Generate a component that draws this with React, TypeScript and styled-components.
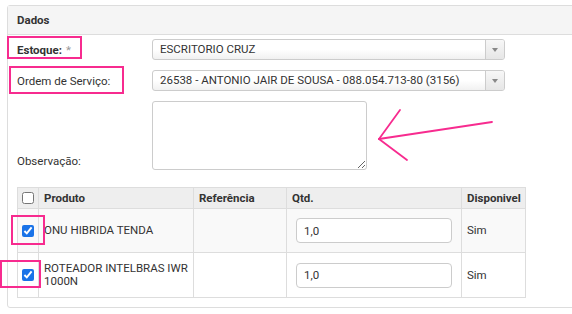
import React from 'react'
import styled, { createGlobalStyle } from 'styled-components'

const GlobalStyle = createGlobalStyle`
  body {
    margin: 0;
    background: #fff;
    font-family: Roboto, 'Liberation Sans', sans-serif;
    font-size: 11.5px;
    color: #333;
  }
`

const Page = styled.div`
  position: relative;
  width: 572px;
  height: 314px;
  overflow: hidden;
  padding: 5px 0 0 7px;
  box-sizing: border-box;
`

const Panel = styled.div`
  width: 600px;
  border: 1px solid #ddd;
  border-radius: 3px;
`

const PanelHeading = styled.div`
  height: 28px;
  line-height: 28px;
  padding-left: 9px;
  background: #f5f5f5;
  border-bottom: 1px solid #ddd;
  font-weight: 700;
`

const PanelBody = styled.div`
  padding: 4px 9px 9px;
`

const FormGrid = styled.div`
  display: grid;
  grid-template-columns: 135px 353px;
  row-gap: 10px;
`

const Label = styled.label<{ $bold?: boolean; $end?: boolean }>`
  display: flex;
  align-items: ${({ $end }) => ($end ? 'flex-end' : 'center')};
  padding-bottom: ${({ $end }) => ($end ? '2px' : '0')};
  font-weight: ${({ $bold }) => ($bold ? 700 : 400)};
  gap: 4px;
`

const Required = styled.span`
  color: #999;
  font-weight: 400;
`

const Select = styled.div`
  width: 353px;
  height: 21px;
  box-sizing: border-box;
  display: flex;
  align-items: stretch;
  border: 1px solid #ccc;
  border-radius: 3px;
  background: linear-gradient(#fff 0%, #fff 50%, #f1f1f1 100%);
  overflow: hidden;
`

const SelectValue = styled.span`
  flex: 1;
  padding-left: 7px;
  line-height: 19px;
  white-space: nowrap;
`

const SelectArrow = styled.span`
  width: 18px;
  border-left: 1px solid #ccc;
  background: linear-gradient(#f7f7f7, #e6e6e6);
  display: flex;
  align-items: center;
  justify-content: center;
  &::after {
    content: '';
    border-left: 3px solid transparent;
    border-right: 3px solid transparent;
    border-top: 4px solid #888;
  }
`

const TextArea = styled.textarea`
  width: 215px;
  height: 69px;
  box-sizing: border-box;
  border: 1px solid #ccc;
  border-radius: 3px;
  font-family: inherit;
  margin: 0;
`

const Table = styled.table`
  margin-top: 17px;
  border-collapse: collapse;
  width: 508px;
  table-layout: fixed;
`

const Th = styled.th<{ $w: number }>`
  width: ${({ $w }) => $w}px;
  height: 21px;
  padding: 0 5px;
  background: #eee;
  border: 1px solid #ddd;
  text-align: left;
  font-weight: 700;
  box-sizing: border-box;
`

const CheckTh = styled(Th)`
  padding: 0 0 0 4px;
`

const Tr = styled.tr<{ $striped?: boolean }>`
  background: ${({ $striped }) => ($striped ? '#f9f9f9' : '#fff')};
`

const Td = styled.td`
  border: 1px solid #ddd;
  padding: 9px 5px;
  height: 25px;
  vertical-align: middle;
  line-height: 13px;
`

const CheckTd = styled(Td)`
  padding: 0 0 0 4px;
`

const QtyTd = styled(Td)`
  padding: 9px;
`

const Check = styled.input.attrs({ type: 'checkbox' })`
  margin: 0;
  width: 12px;
  height: 12px;
  display: block;
  accent-color: #1a73e8;
`

const QtyInput = styled.input`
  width: 100%;
  height: 25px;
  box-sizing: border-box;
  border: 1px solid #ccc;
  border-radius: 4px;
  padding: 0 7px;
  font-family: inherit;
  font-size: 11.5px;
  color: #333;
  margin: 0;
`

const Mark = styled.div<{ $x: number; $y: number; $w: number; $h: number }>`
  position: absolute;
  left: ${({ $x }) => $x}px;
  top: ${({ $y }) => $y}px;
  width: ${({ $w }) => $w}px;
  height: ${({ $h }) => $h}px;
  border: 2px solid #f72b8f;
  box-sizing: border-box;
  pointer-events: none;
`

const ArrowSvg = styled.svg`
  position: absolute;
  left: 370px;
  top: 104px;
  pointer-events: none;
`

const items = [
  { nome: 'ONU HIBRIDA TENDA', qtd: '1,0' },
  { nome: 'ROTEADOR INTELBRAS IWR 1000N', qtd: '1,0' },
]

const App = () => {
  return (
    <Page>
      <GlobalStyle />
      <Panel>
        <PanelHeading>Dados</PanelHeading>
        <PanelBody>
          <FormGrid>
            <Label $bold>
              Estoque: <Required>*</Required>
            </Label>
            <Select>
              <SelectValue>ESCRITORIO CRUZ</SelectValue>
              <SelectArrow />
            </Select>
            <Label>Ordem de Serviço:</Label>
            <Select>
              <SelectValue>26538 - ANTONIO JAIR DE SOUSA - 088.054.713-80 (3156)</SelectValue>
              <SelectArrow />
            </Select>
            <Label $end>Observação:</Label>
            <TextArea />
          </FormGrid>
          <Table>
            <thead>
              <tr>
                <CheckTh $w={21}>
                  <Check checked={false} readOnly />
                </CheckTh>
                <Th $w={155}>Produto</Th>
                <Th $w={93}>Referência</Th>
                <Th $w={175}>Qtd.</Th>
                <Th $w={64}>Disponivel</Th>
              </tr>
            </thead>
            <tbody>
              {items.map((item, i) => (
                <Tr key={item.nome} $striped={i % 2 === 0}>
                  <CheckTd>
                    <Check checked readOnly />
                  </CheckTd>
                  <Td>{item.nome}</Td>
                  <Td />
                  <QtyTd>
                    <QtyInput defaultValue={item.qtd} />
                  </QtyTd>
                  <Td>Sim</Td>
                </Tr>
              ))}
            </tbody>
          </Table>
        </PanelBody>
      </Panel>
      <Mark $x={7} $y={36} $w={75} $h={23} />
      <Mark $x={9} $y={66} $w={115} $h={28} />
      <Mark $x={11} $y={215} $w={34} $h={30} />
      <Mark $x={0} $y={260} $w={41} $h={28} />
      <ArrowSvg width="130" height="60" viewBox="0 0 130 60">
        <g stroke="#f72b8f" strokeWidth="1.8" fill="none" strokeLinecap="round">
          <line x1="122" y1="18" x2="9" y2="35" />
          <line x1="9" y1="35" x2="30" y2="6" />
          <line x1="9" y1="35" x2="37" y2="56" />
        </g>
      </ArrowSvg>
    </Page>
  )
}

export default App
